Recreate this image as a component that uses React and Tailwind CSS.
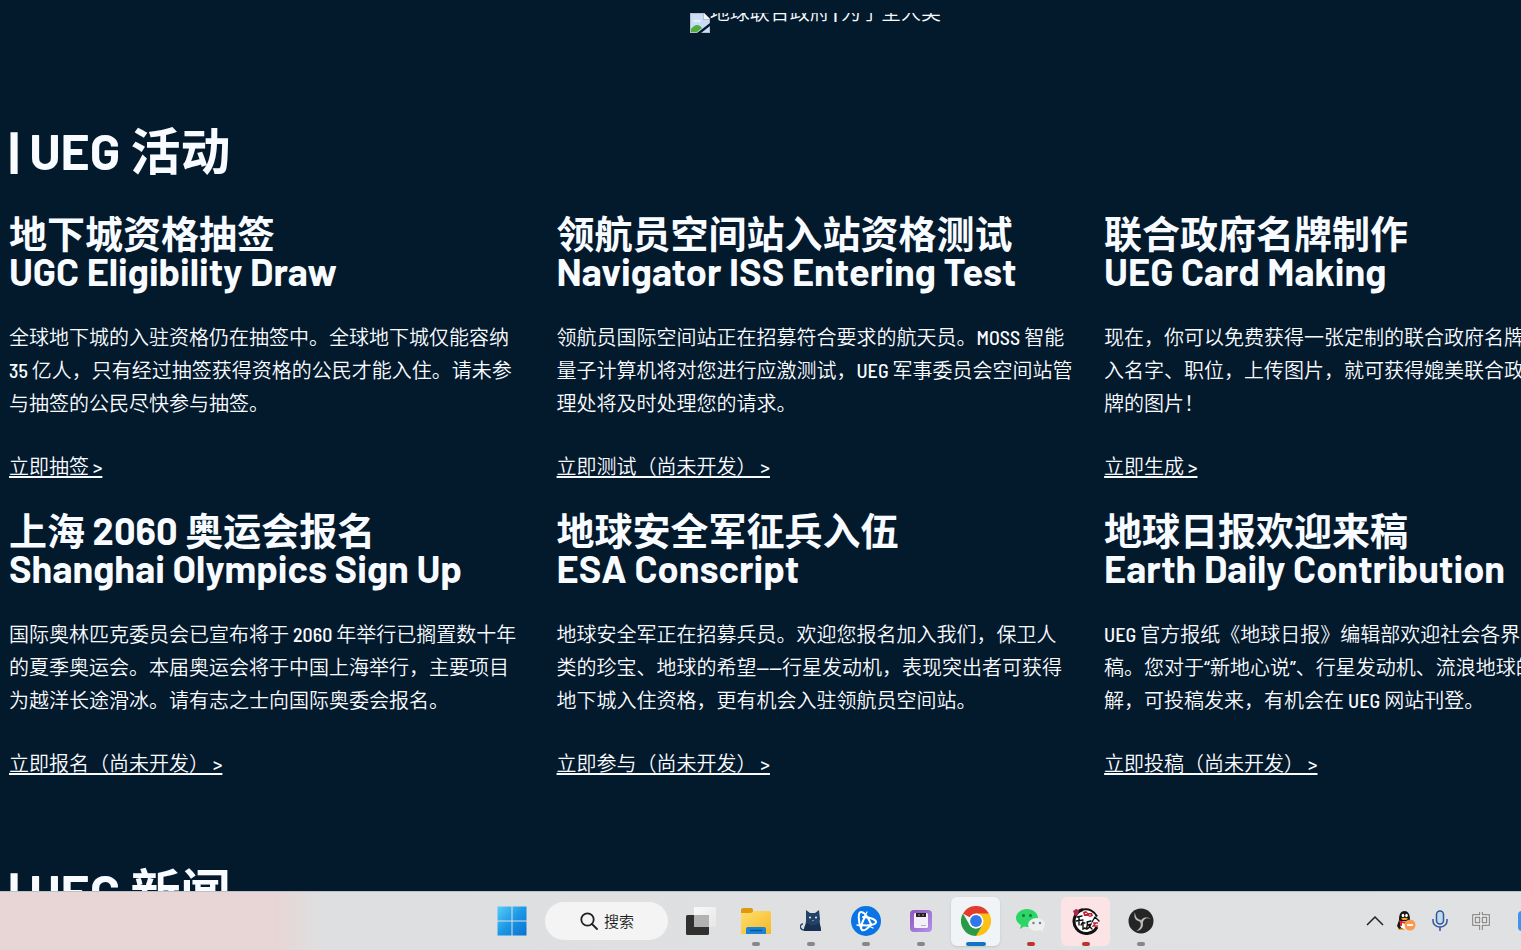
const activities = [
  {
    zh: "地下城资格抽签",
    en: "UGC Eligibility Draw",
    body: "全球地下城的入驻资格仍在抽签中。全球地下城仅能容纳\n35 亿人，只有经过抽签获得资格的公民才能入住。请未参\n与抽签的公民尽快参与抽签。",
    link: "立即抽签 >",
  },
  {
    zh: "领航员空间站入站资格测试",
    en: "Navigator ISS Entering Test",
    body: "领航员国际空间站正在招募符合要求的航天员。MOSS 智能\n量子计算机将对您进行应激测试，UEG 军事委员会空间站管\n理处将及时处理您的请求。",
    link: "立即测试（尚未开发） >",
  },
  {
    zh: "联合政府名牌制作",
    en: "UEG Card Making",
    body: "现在，你可以免费获得一张定制的联合政府名牌。只需输\n入名字、职位，上传图片，就可获得媲美联合政府官方名\n牌的图片！",
    link: "立即生成 >",
  },
  {
    zh: "上海 2060 奥运会报名",
    en: "Shanghai Olympics Sign Up",
    body: "国际奥林匹克委员会已宣布将于 2060 年举行已搁置数十年\n的夏季奥运会。本届奥运会将于中国上海举行，主要项目\n为越洋长途滑冰。请有志之士向国际奥委会报名。",
    link: "立即报名（尚未开发） >",
  },
  {
    zh: "地球安全军征兵入伍",
    en: "ESA Conscript",
    body: "地球安全军正在招募兵员。欢迎您报名加入我们，保卫人\n类的珍宝、地球的希望——行星发动机，表现突出者可获得\n地下城入住资格，更有机会入驻领航员空间站。",
    link: "立即参与（尚未开发） >",
  },
  {
    zh: "地球日报欢迎来稿",
    en: "Earth Daily Contribution",
    body: "UEG 官方报纸《地球日报》编辑部欢迎社会各界人士投\n稿。您对于“新地心说”、行星发动机、流浪地球的见\n解，可投稿发来，有机会在 UEG 网站刊登。",
    link: "立即投稿（尚未开发） >",
  },
];

const BrokenImage = () => (
  <svg width="20" height="20" viewBox="0 0 20 20" className="shrink-0">
    <path d="M0 0h14l6 6v14H0z" fill="#b9bcc4" />
    <path d="M1 1h12v6h6v12H1z" fill="#c9dcf8" />
    <path d="M3 8a3 2 0 0 1 5-1 2 2 0 0 1 3 2H3z" fill="#e4eefc" />
    <path d="M1 19v-3c4-5 8-5 11-1l-5 4z" fill="#4fae3c" />
    <path d="M14 0l6 6h-6z" fill="#f4f5f8" />
    <path d="M7 20l13-10v3L11 20z" fill="#03192c" />
  </svg>
);

const WindowsIcon = () => (
  <svg width="30" height="30" viewBox="0 0 30 30">
    <defs>
      <linearGradient id="win" x1="0" y1="0" x2="30" y2="30" gradientUnits="userSpaceOnUse">
        <stop offset="0" stopColor="#5ccdf9" />
        <stop offset="0.5" stopColor="#1b98e6" />
        <stop offset="1" stopColor="#0a6fd0" />
      </linearGradient>
    </defs>
    <path d="M.5.5h14v14H.5zM15.500.5h14v14h-14zM.5 15.500h14v14H.5zM15.500 15.500h14v14h-14z" fill="url(#win)" />
  </svg>
);

const SearchIcon = () => (
  <svg width="18" height="18" viewBox="0 0 18 18" fill="none" stroke="#202124" strokeWidth="1.8">
    <circle cx="7.500" cy="7.500" r="6.200" />
    <path d="M12 12l5 5" strokeLinecap="round" />
  </svg>
);

const TaskViewIcon = () => (
  <svg width="30" height="30" viewBox="0 0 30 30">
    <defs>
      <linearGradient id="tv" x1="0" y1="0" x2="1" y2="1">
        <stop offset="0" stopColor="#fafafa" />
        <stop offset="1" stopColor="#e6e6e6" />
      </linearGradient>
    </defs>
    <rect x="0" y="9" width="23" height="20" rx="1.500" fill="#30312f" />
    <rect x="8" y="1" width="22" height="20" rx="1" fill="url(#tv)" />
    <path d="M8 9h15v12H8z" fill="#b2b2b2" />
  </svg>
);

const FolderIcon = () => (
  <svg width="30" height="30" viewBox="0 0 30 30">
    <defs>
      <linearGradient id="folder" x1="0" y1="0" x2="1" y2="1">
        <stop offset="0" stopColor="#ffdf6c" />
        <stop offset="1" stopColor="#f4b827" />
      </linearGradient>
    </defs>
    <path d="M0 4a2 2 0 0 1 2-2h8a2 2 0 0 1 2 2v4H0z" fill="#dd9a10" />
    <path d="M0 7h10l3-2h15a2 2 0 0 1 2 2v21H0z" fill="url(#folder)" />
    <path d="M5 28v-5a2 2 0 0 1 2-2h16a2 2 0 0 1 2 2v5z" fill="#1784d6" />
    <path d="M9 24.500h12" stroke="#0b5494" strokeWidth="1.500" />
  </svg>
);

const CatIcon = () => (
  <svg width="22" height="22" viewBox="0 0 22 22">
    <path d="M6 20c-7 1-7-6-3-6" fill="none" stroke="#29486c" strokeWidth="1.500" />
    <path d="M6 0l4 3h5l4-3 1 9c-1 3 1 8 1 12H4c0-4 2-7 2-10z" fill="#244168" />
    <path d="M4 21c0-4 1-6 3-8 4 3 8 3 12 0 1 2 2 5 2 8z" fill="#183152" />
    <circle cx="10" cy="7.500" r="1" fill="#eef6ff" />
    <circle cx="16" cy="7.500" r="1" fill="#eef6ff" />
    <path d="M12 10l1 1 1-1" fill="none" stroke="#8fb4dc" strokeWidth=".7" />
  </svg>
);

const BattleIcon = () => (
  <svg width="30" height="30" viewBox="0 0 30 30">
    <circle cx="15" cy="15" r="15" fill="#0b74e5" />
    <g fill="none" stroke="#fff" strokeLinecap="round" strokeLinejoin="round">
      <path d="M10 22C7 15 7 6 10 6c3 0 7 5 10 12" strokeWidth="2" />
      <path d="M12 11c8 0 13 3 13 5 0 3-8 4-15 3" strokeWidth="2" />
      <path d="M20 18c-3 5-7 7-9 6-2-2 0-8 3-13" strokeWidth="2" />
      <path d="M6 19l5 1M16 6l-3 5M22 22l-4-2" strokeWidth="1.300" />
    </g>
  </svg>
);

const PurpleIcon = () => (
  <svg width="22" height="22" viewBox="0 0 22 22">
    <defs>
      <linearGradient id="purple" x1="0" y1="0" x2="1" y2="1">
        <stop offset="0" stopColor="#8d55b8" />
        <stop offset="1" stopColor="#b294ea" />
      </linearGradient>
    </defs>
    <rect width="22" height="22" rx="4" fill="url(#purple)" />
    <rect x="4" y="3" width="14" height="15" rx="1.500" fill="#f3f0fa" />
    <path d="M6 3h10v4H6z" fill="#22202a" />
    <path d="M8 5h2M12 5h2" stroke="#b9a04a" />
    <path d="M11 15.500h5" stroke="#b5aec6" />
  </svg>
);

const ChromeIcon = () => (
  <svg width="30" height="30" viewBox="0 0 30 30">
    <path d="M15 15L2 7.500A15 15 0 0 1 28 7.500z" fill="#e33b2e" />
    <path d="M15 15V7.500h13A15 15 0 0 1 15 30z" fill="#fbc116" />
    <path d="M2 7.500l6.500 11.250a7.500 7.500 0 0 0 13 0L15 30A15 15 0 0 1 2 7.500z" fill="#2b9a46" />
    <circle cx="15" cy="15" r="7.500" fill="#fff" />
    <circle cx="15" cy="15" r="5.900" fill="#2f78e8" />
  </svg>
);

const WeChatIcon = () => (
  <svg width="30" height="24" viewBox="0 0 30 24">
    <path d="M11 0c6 0 11 4 11 9s-5 9-11 9l-3-.4L4 20l1-4C2 14.500 0 12 0 9c0-5 5-9 11-9z" fill="#2bd566" />
    <path d="M20.500 9c5 0 8.500 3 8.500 6.500 0 2-1 3.500-2.500 4.800l.5 2.400-2.800-1.400c-5 2-12-.5-12-5.800C12.200 12 16 9 20.500 9z" fill="#ecf0f0" />
    <circle cx="7.500" cy="6.500" r="1.500" fill="#14743a" />
    <circle cx="14.500" cy="6.500" r="1.500" fill="#14743a" />
    <circle cx="17.500" cy="14" r="1.200" fill="#737b79" />
    <circle cx="24" cy="14" r="1.200" fill="#737b79" />
  </svg>
);

const RiceIcon = () => (
  <svg width="30" height="30" viewBox="0 0 30 30">
    <circle cx="15" cy="15.500" r="12" fill="#fff" />
    <path d="M12 3.500A12.200 12.200 0 1 0 26 21" fill="none" stroke="#111" strokeWidth="3" />
    <path d="M12 3.500a12.500 12.500 0 0 1 14 7" fill="none" stroke="#111" strokeWidth="2" />
    <g fill="none" stroke="#111" strokeWidth="1.400" strokeLinecap="round">
      <path d="M6 11l5-1M5 15l7-1M8 11v8" />
      <path d="M12 16l-2 3M12 17h2M12 18v5l2-1M16 16l4-1M16.500 16c0 4 0 5-1.500 7M17 19l3-1c-1 3-2 4-4 5M18 20l3 3" />
      <path d="M24 11l-3 5M24 11l4 4" />
    </g>
    <path d="M22 17h5M25 17l-3 3h5" fill="none" stroke="#b8283c" strokeWidth="1.300" />
    <path d="M2 5l3-2 3 1-1 5-3 1z" fill="#aa2847" />
    <path d="M12 6l3-1 2 2 4 0 1 3-3 1-2-1-4 0z" fill="#c12036" />
    <path d="M14 7.500h2M18 9h2" stroke="#fff" strokeWidth=".8" />
  </svg>
);

const ObsIcon = () => (
  <svg width="26" height="26" viewBox="0 0 26 26">
    <circle cx="13" cy="13" r="12.500" fill="#252526" />
    <g fill="#bcbcbe">
      <path d="M7 4c-2 6 1 9 6 10l1-2c-4 0-7-3-7-8z" />
      <path d="M23 11c-5-3-10-1-10 3l2 1c0-4 4-6 8-4z" />
      <path d="M8 23c5 0 9-5 6-10l-2 1c2 3 0 7-4 9z" />
    </g>
  </svg>
);

const apps = [
  { name: "文件资源管理器", icon: FolderIcon },
  { name: "Clash", icon: CatIcon },
  { name: "战网", icon: BattleIcon },
  { name: "存储工具", icon: PurpleIcon },
  { name: "Chrome", icon: ChromeIcon, tile: "bg-[#f1f4f6] shadow-sm", bar: "w-5 bg-[#1573c4]" },
  { name: "微信", icon: WeChatIcon, bar: "w-2 bg-[#bd3330]" },
  { name: "干饭会", icon: RiceIcon, tile: "bg-[#fce4e6]", bar: "w-2 bg-[#bd3330]" },
  { name: "OBS", icon: ObsIcon },
];

const headingFont = "font-['Barlow','Roboto_Condensed','Noto_Sans_CJK_SC',sans-serif] font-bold";

const ActivityCard = ({ item }) => (
  <article className="pl-[9px]">
    <h2 className={`mb-[31px] text-[38px] leading-[38px] ${headingFont}`}>
      {item.zh}
      <br />
      {item.en}
    </h2>
    <p className="mb-[30px] text-xl leading-[33px]">{item.body}</p>
    <a href="#" className="block text-xl leading-[33px] underline decoration-2 underline-offset-2">
      {item.link}
    </a>
  </article>
);

const TrayIcons = () => (
  <div className="flex items-center">
    <button aria-label="显示隐藏的图标" className="mr-3">
      <svg width="18" height="12" viewBox="0 0 18 12" fill="none" stroke="#222" strokeWidth="1.500">
        <path d="M1 10l8-8 8 8" />
      </svg>
    </button>
    <button aria-label="QQ" className="mr-4">
      <svg width="20" height="20" viewBox="0 0 20 20">
        <path d="M3 9C3 3 5 0 8.500 0S14 3 14 9l2 5-2 4H3l-2-3z" fill="#161616" />
        <ellipse cx="8.500" cy="14" rx="4.500" ry="4" fill="#fff" />
        <ellipse cx="7" cy="4.500" rx="1.300" ry="1.800" fill="#fff" />
        <ellipse cx="10.500" cy="4.500" rx="1.300" ry="1.800" fill="#fff" />
        <path d="M5 7.500c2-1 5-1 7 0-1 2-6 2-7 0z" fill="#f5a21e" />
        <path d="M3 9c3 2 8 2 11 0v3c-3 1-6 1-8 0v3H4v-3z" fill="#e22a2d" />
        <path d="M2 19c1-2 5-2 7 0z" fill="#f5a21e" />
        <circle cx="14" cy="14" r="5.500" fill="#f79a52" />
        <path d="M11 14h6" stroke="#fff" strokeWidth="1.800" />
      </svg>
    </button>
    <button aria-label="麦克风" className="mr-6">
      <svg width="16" height="22" viewBox="0 0 16 22" fill="none" stroke="#31549f" strokeWidth="1.500">
        <rect x="4.500" y="1" width="7" height="13" rx="3.500" fill="#c3dbe8" />
        <path d="M1 9v2a7 6 0 0 0 14 0V9M8 17v4" />
      </svg>
    </button>
    <button aria-label="中文输入法" className="mr-7">
      <svg width="18" height="20" viewBox="0 0 18 20" fill="none">
        <path d="M2 5h14v8H2zM9 1v18" stroke="#777" strokeWidth="3.500" />
        <path d="M2 5h14v8H2zM9 1v18" stroke="#f3f3f3" strokeWidth="1.500" />
      </svg>
    </button>
    <button aria-label="通知" className="size-5 rounded bg-[#3b94f5]" />
  </div>
);

const Taskbar = () => (
  <footer className="h-[59px] shrink-0 overflow-hidden border-t border-[#b9c0c8] bg-linear-to-r from-[#e8d5d5] from-18% via-[#dedfe0] via-21% to-[#e0e1e3]">
    <div className="grid h-full w-[109%] grid-cols-[1fr_auto_1fr] items-center">
      <div />
      <div className="flex items-center pl-2">
        <button aria-label="开始" className="mr-[18px]">
          <WindowsIcon />
        </button>
        <button className="mr-[18px] flex h-[38px] w-[123px] items-center justify-center gap-1.5 rounded-full bg-[#f4f4f5] text-[15px] text-[#1b1b1b]">
          <SearchIcon />
          搜索
        </button>
        <button aria-label="任务视图" className="mr-3">
          <TaskViewIcon />
        </button>
        {apps.map(({ name, icon: Icon, tile, bar }) => (
          <button key={name} aria-label={name} className="flex w-[55px] justify-center">
            <span className={`relative flex h-[49px] w-[49px] items-center justify-center rounded-md ${tile || ""}`}>
              <Icon />
              <span
                className={`absolute bottom-0 left-1/2 h-1 -translate-x-1/2 rounded-full ${bar || "w-2 bg-[#858789]"}`}
              />
            </span>
          </button>
        ))}
      </div>
      <div className="flex justify-end pr-[120px]">
        <TrayIcons />
      </div>
    </div>
  </footer>
);

const App = () => {
  return (
    <div
      lang="zh-CN"
      className="flex h-screen flex-col overflow-hidden bg-[#03192c] font-['Barlow_Semi_Condensed','Noto_Sans_CJK_SC_DemiLight','Noto_Sans_CJK_SC',sans-serif] font-medium text-[#f8fbff]"
    >
      <main className="min-h-0 flex-1 overflow-hidden">
        <div className="w-[108%] pt-[13px] whitespace-pre">
          <div role="img" aria-label="地球联合政府 | 为了全人类" className="flex h-5 justify-center overflow-hidden pr-3 text-xl">
            <BrokenImage />
            <span className="-mt-4 leading-[30px]">地球联合政府 | 为了全人类</span>
          </div>

          <h1 className={`mt-[87px] pl-[9px] text-[50px] leading-[60px] ${headingFont}`}>| UEG 活动</h1>
          <section className="mt-[34px] grid grid-cols-3 gap-y-[28px]">
            {activities.map((item) => (
              <ActivityCard key={item.en} item={item} />
            ))}
          </section>

          <h1 className={`mt-[81px] pl-[9px] text-[50px] leading-[60px] ${headingFont}`}>| UEG 新闻</h1>
        </div>
      </main>
      <Taskbar />
    </div>
  );
};

export default App;
